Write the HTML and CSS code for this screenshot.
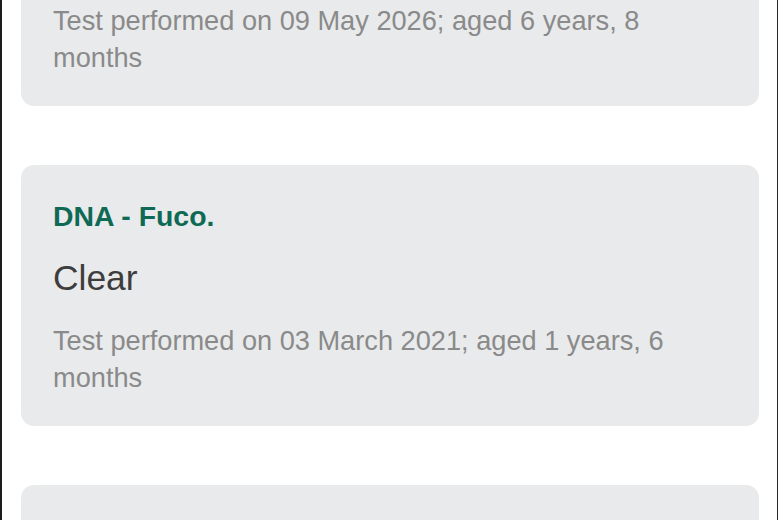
FILE: index.html
```html
<!DOCTYPE html>
<html lang="en">
<head>
  <meta charset="UTF-8" />
  <meta name="viewport" content="width=device-width, initial-scale=1.0"/>
  <title>Health Tests</title>
  <link rel="stylesheet" href="styles.css">
</head>
<body>
  <div class="screen">
    <div class="results">
      <div class="card">
        <div class="test-name">DNA - PRA</div>
        <div class="test-result">Clear</div>
        <div class="test-info">Test performed on 09 May 2026; aged 6 years, 8 months</div>
      </div>
      <div class="card">
        <div class="test-name">DNA - Fuco.</div>
        <div class="test-result">Clear</div>
        <div class="test-info">Test performed on 03 March 2021; aged 1 years, 6 months</div>
      </div>
      <div class="card">
        <div class="test-name">DNA - CEA</div>
        <div class="test-result">Clear</div>
        <div class="test-info">Test performed on 03 March 2021; aged 1 years, 6 months</div>
      </div>
    </div>
  </div>
</body>
</html>
```

FILE: styles.css
```css
body {
  margin: 0;
  background: #fff;
  font-family: "Liberation Sans", Arial, sans-serif;
}
.screen {
  width: 775px;
  height: 520px;
  overflow: hidden;
  border-left: 2px solid #1c1c1c;
  border-right: 1px solid #2a2a2a;
  background: #fff;
}
.results {
  display: flex;
  flex-direction: column;
  gap: 59px;
  margin: -155px 18px 0 19px;
}
.card {
  background: #e9eaeb;
  border-radius: 13px;
  padding: 34px 32px 30px;
}
.test-name {
  color: #0f6a55;
  font-weight: bold;
  font-size: 28.4px;
  line-height: 34px;
}
.test-result {
  color: #3d3d3d;
  font-size: 35.4px;
  line-height: 42px;
  margin-top: 24px;
}
.test-info {
  color: #8a8a8a;
  font-size: 27.2px;
  line-height: 37px;
  margin-top: 23px;
}
```
